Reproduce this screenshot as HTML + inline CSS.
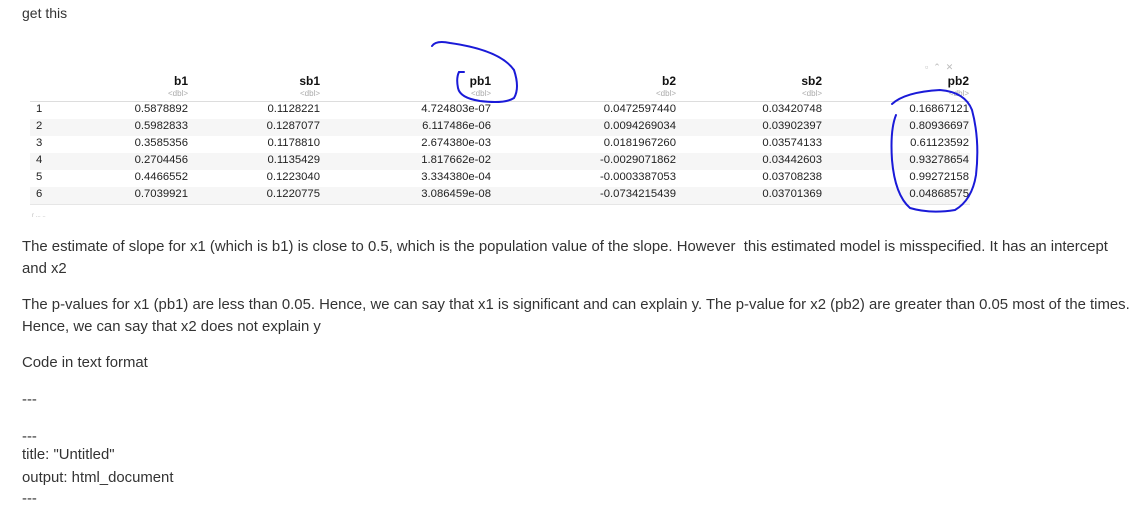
<!DOCTYPE html>
<html><head><meta charset="utf-8"><style>
body{margin:0;width:1139px;height:514px;background:#fff;font-family:"Liberation Sans",sans-serif;color:#333;position:relative;overflow:hidden}
.t{position:absolute;left:22px;font-size:14.9px;white-space:nowrap;line-height:16px}
.c{position:absolute;font-size:11.3px;color:#222;text-align:right;white-space:nowrap}
.h{position:absolute;font-size:12px;font-weight:bold;color:#111;text-align:right}
.d{position:absolute;font-size:8px;color:#aaa;text-align:right}
.row{position:absolute;left:30px;width:940px;height:17px}
</style></head><body>
<div class="t" style="top:5px;font-size:14px">get this</div>

<div style="position:absolute;left:30px;top:101px;width:940px;height:1px;background:#ddd"></div>
<div class="row" style="top:119px;background:#f6f6f6"></div>
<div class="row" style="top:153px;background:#f6f6f6"></div>
<div class="row" style="top:187px;background:#f6f6f6"></div>
<div style="position:absolute;left:30px;top:204px;width:940px;height:1px;background:#e6e6e6"></div>

<div id="tbl"></div>
<script>
const cols=[188,320,491,676,822,969];
const names=["b1","sb1","pb1","b2","sb2","pb2"];
const data=[
["0.5878892","0.1128221","4.724803e-07","0.0472597440","0.03420748","0.16867121"],
["0.5982833","0.1287077","6.117486e-06","0.0094269034","0.03902397","0.80936697"],
["0.3585356","0.1178810","2.674380e-03","0.0181967260","0.03574133","0.61123592"],
["0.2704456","0.1135429","1.817662e-02","-0.0029071862","0.03442603","0.93278654"],
["0.4466552","0.1223040","3.334380e-04","-0.0003387053","0.03708238","0.99272158"],
["0.7039921","0.1220775","3.086459e-08","-0.0734215439","0.03701369","0.04868575"]];
let h="";
cols.forEach((x,i)=>{h+=`<div class="h" style="right:${1139-x}px;top:74px">${names[i]}</div><div class="d" style="right:${1139-x}px;top:89px">&lt;dbl&gt;</div>`;});
data.forEach((r,j)=>{const y=103+j*17;h+=`<div class="c" style="left:36px;top:${y}px;text-align:left">${j+1}</div>`;
r.forEach((v,i)=>{h+=`<div class="c" style="right:${1139-cols[i]}px;top:${y}px">${v}</div>`;});});
document.getElementById("tbl").innerHTML=h;
</script>
<div style="position:absolute;left:925px;top:62px;font-size:9px;color:#bbb">▫ &nbsp;⌃ &nbsp;✕</div>
<div style="position:absolute;left:32px;top:213px;font-size:6px;color:#bbb">r ... ..</div>

<svg style="position:absolute;left:0;top:0" width="1139" height="514" fill="none" stroke="#1a1ad8" stroke-width="2" stroke-linecap="round">
<path d="M432 46 Q436 40 450 43 Q500 50 514 70 Q520 88 514 98 Q505 104 480 101 Q460 98 458 88 Q456 78 459 72 L464 72"/>
<path d="M892 104 Q905 92 940 90 Q965 92 972 110 Q980 140 976 175 Q972 200 955 210 Q930 214 910 208 Q895 195 892 160 Q890 130 896 115"/>
</svg>

<div class="t" style="top:239px">The estimate of slope for x1 (which is b1) is close to 0.5, which is the population value of the slope. However &nbsp;this estimated model is misspecified. It has an intercept</div>
<div class="t" style="top:261px">and x2</div>
<div class="t" style="top:297px">The p-values for x1 (pb1) are less than 0.05. Hence, we can say that x1 is significant and can explain y. The p-value for x2 (pb2) are greater than 0.05 most of the times.</div>
<div class="t" style="top:319px">Hence, we can say that x2 does not explain y</div>
<div class="t" style="top:355px">Code in text format</div>
<div class="t" style="top:392px">---</div>
<div class="t" style="top:429px">---</div>
<div class="t" style="top:447px">title: "Untitled"</div>
<div class="t" style="top:470px">output: html_document</div>
<div class="t" style="top:491px">---</div>
</body></html>
